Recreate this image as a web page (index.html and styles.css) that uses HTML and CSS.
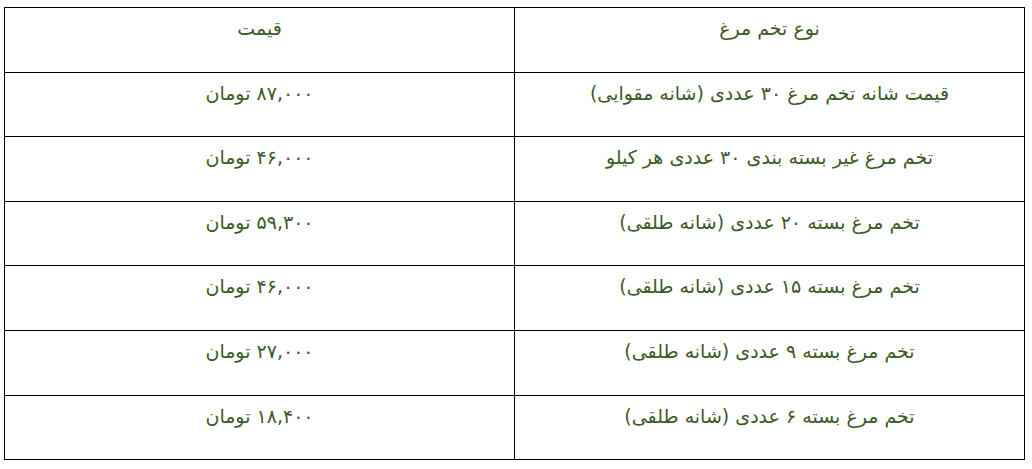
FILE: index.html
```html
<!DOCTYPE html>
<html lang="fa" dir="rtl">
<head>
<meta charset="utf-8">
<link rel="stylesheet" href="styles.css">
</head>
<body>
<table class="price-table">
  <tbody>
    <tr><td>نوع تخم مرغ</td><td>قیمت</td></tr>
    <tr><td>قیمت شانه تخم مرغ ۳۰ عددی (شانه مقوایی)</td><td>۸۷,۰۰۰ تومان</td></tr>
    <tr><td>تخم مرغ غیر بسته بندی ۳۰ عددی هر کیلو</td><td>۴۶,۰۰۰ تومان</td></tr>
    <tr><td>تخم مرغ بسته ۲۰ عددی (شانه طلقی)</td><td>۵۹,۳۰۰ تومان</td></tr>
    <tr><td>تخم مرغ بسته ۱۵ عددی (شانه طلقی)</td><td>۴۶,۰۰۰ تومان</td></tr>
    <tr><td>تخم مرغ بسته ۹ عددی (شانه طلقی)</td><td>۲۷,۰۰۰ تومان</td></tr>
    <tr><td>تخم مرغ بسته ۶ عددی (شانه طلقی)</td><td>۱۸,۴۰۰ تومان</td></tr>
  </tbody>
</table>
</body>
</html>
```
FILE: styles.css
```css
html, body {
  margin: 0;
  padding: 0;
  background: #ffffff;
}
body {
  padding: 7px 7px 0 5px;
  font-family: "DejaVu Sans", "Noto Sans", sans-serif;
}
.price-table {
  width: 1021px;
  border-collapse: collapse;
  table-layout: fixed;
}
.price-table td {
  width: 50%;
  border: 1.5px solid #000;
  height: 64.6px;
  box-sizing: border-box;
  padding: 8px 8px 0;
  vertical-align: top;
  text-align: center;
  color: #3b5a25;
  font-size: 19px;
  line-height: 24px;
}
```
